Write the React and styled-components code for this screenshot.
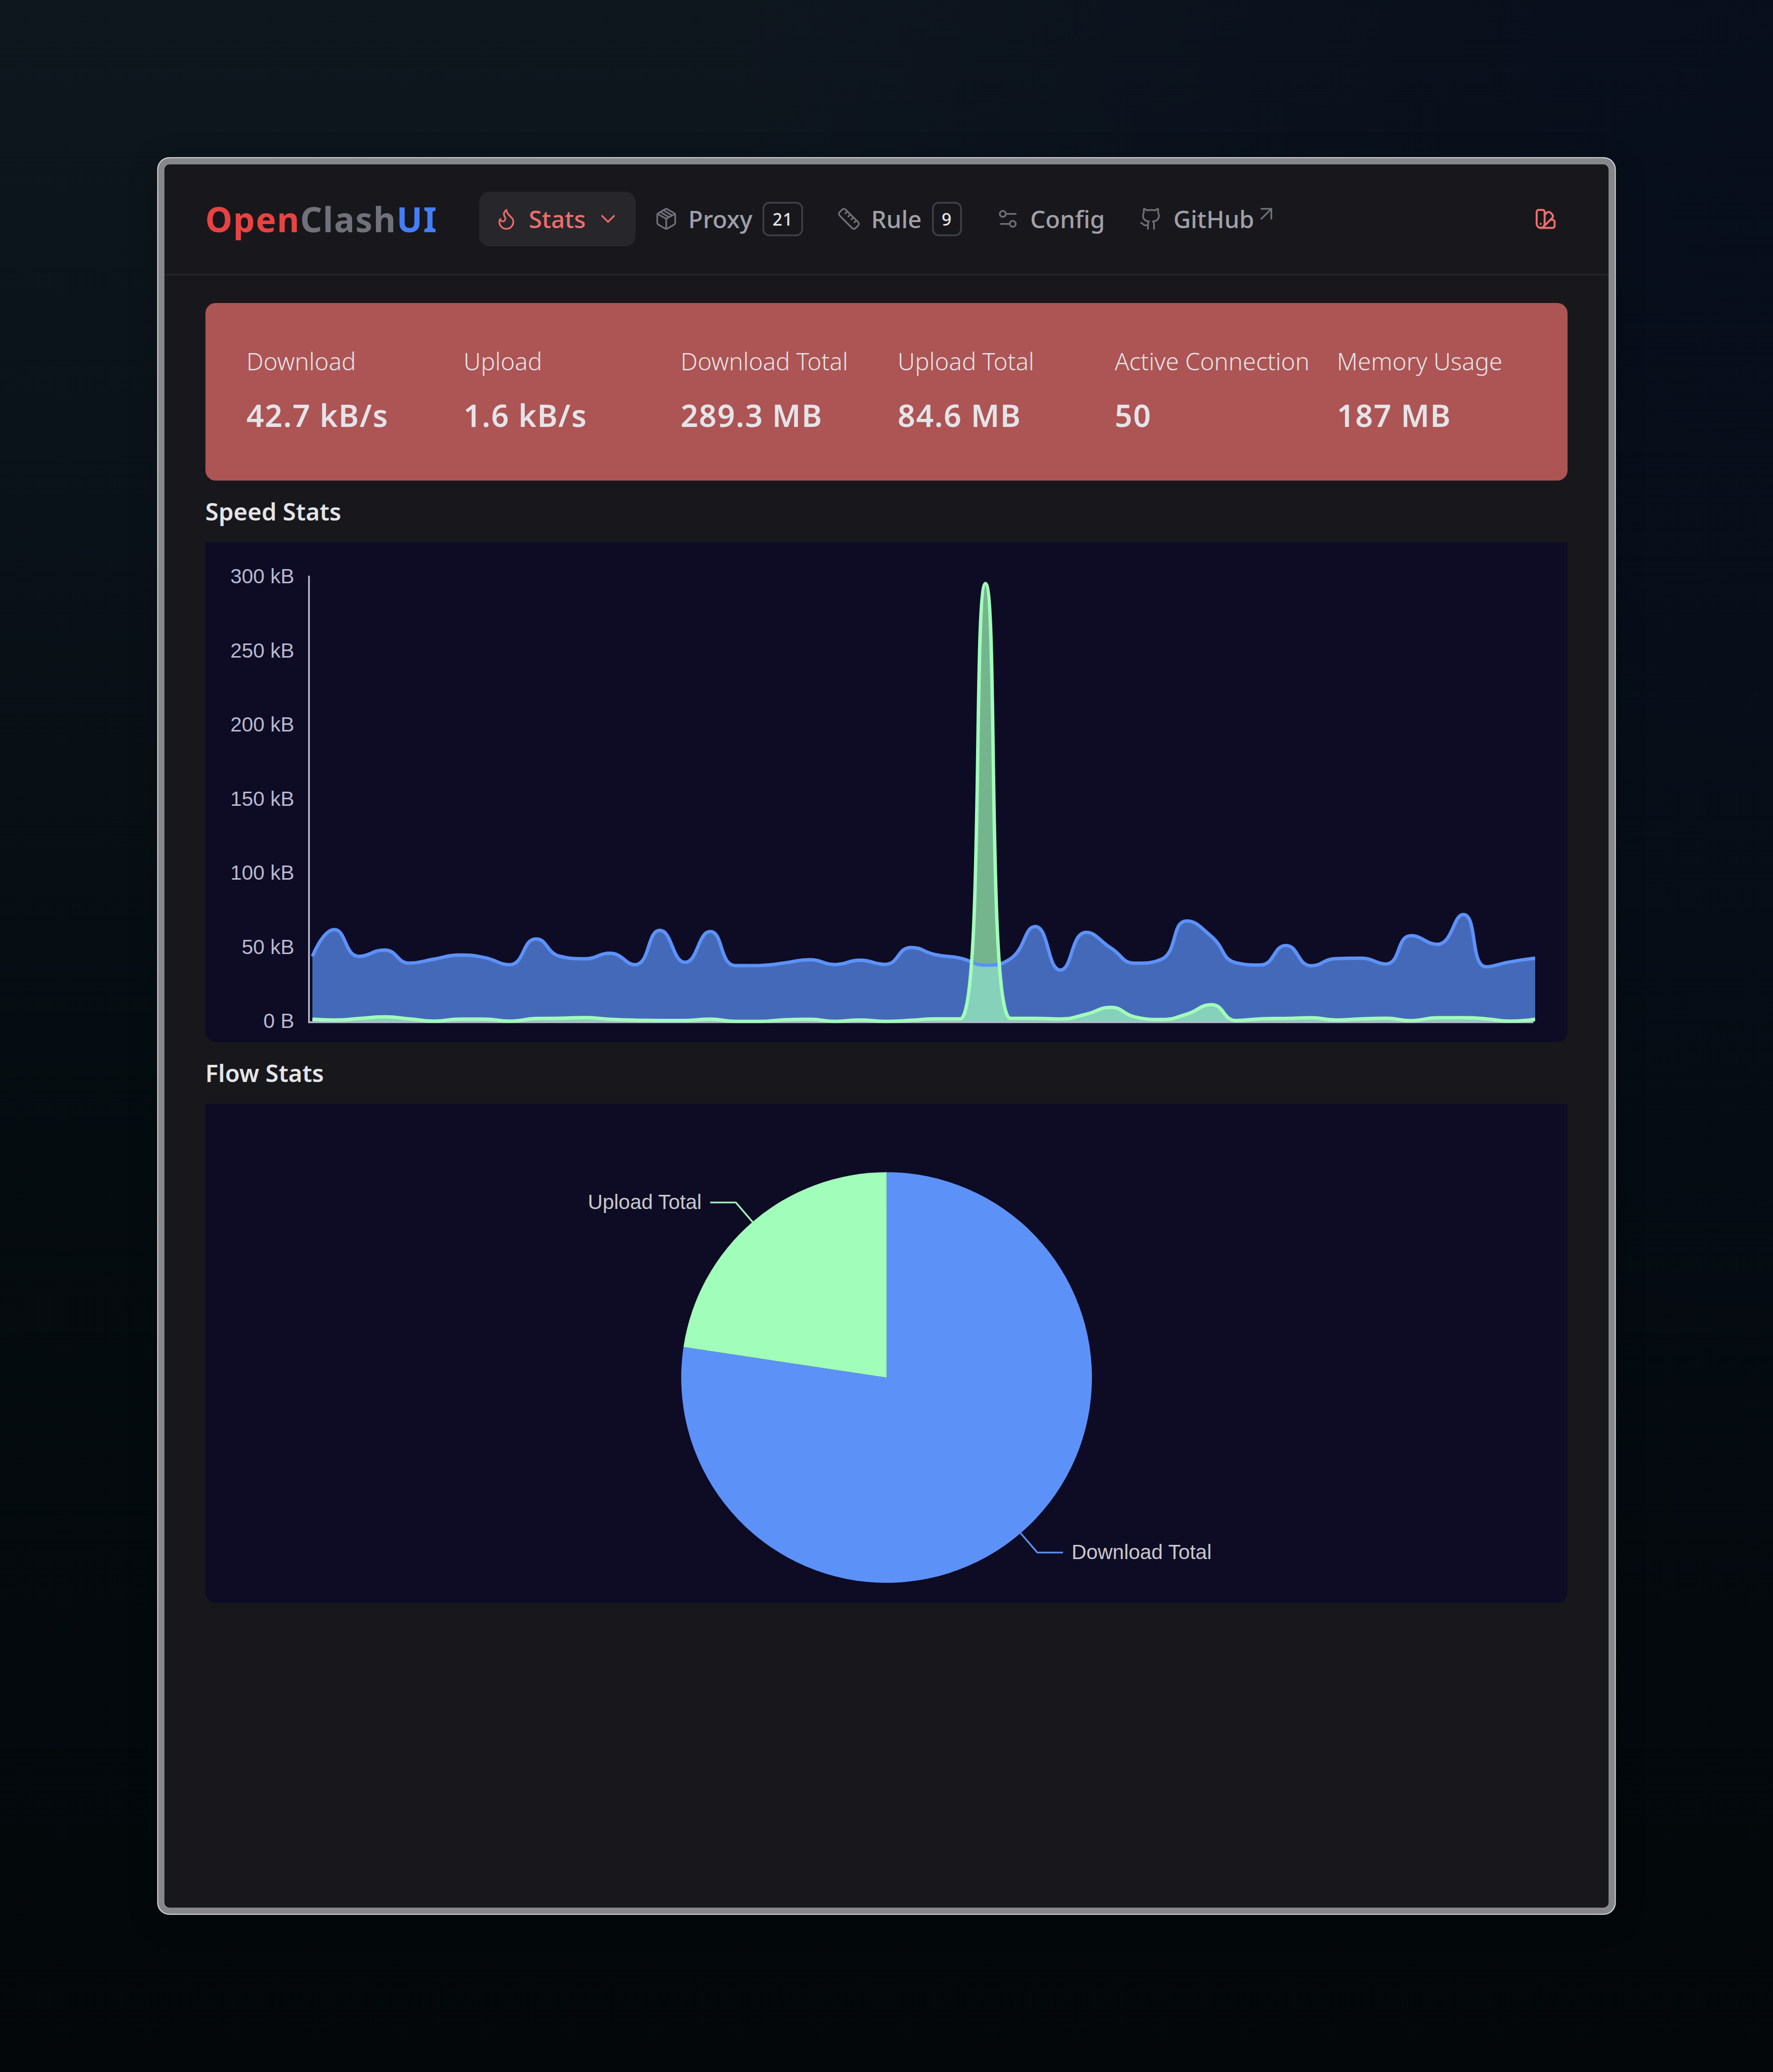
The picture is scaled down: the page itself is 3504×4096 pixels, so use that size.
import React from "react";
import styled, { createGlobalStyle, css } from "styled-components";

/* One design pixel on the 1036x1211 layout grid. */
const U = 3504 / 1036;
const u = (n) => `${+(n * U).toFixed(3)}px`;

const c = {
  panel: "#18181c",
  raised: "#27272b",
  border: "#3f3f47",
  text: "#e4e4e8",
  muted: "#a0a0aa",
  dim: "#71717b",
  accent: "#ee6e6d",
  card: "#ad5454",
  chart: "#0e0b25",
  axis: "#b9b8ce",
  down: "#5c92f8",
  up: "#a1fdba",
};

const GlobalStyle = createGlobalStyle`
  *, *::before, *::after { box-sizing: border-box; }
  body {
    margin: 0;
    font-family: "Noto Sans", "Open Sans", sans-serif;
    -webkit-font-smoothing: antialiased;
  }
`;

const Desktop = styled.div`
  width: 3504px;
  height: 4096px;
  padding: ${u(96)};
  display: flex;
  background:
    radial-gradient(ellipse 60% 75% at 100% 8%, rgba(5, 11, 27, 0.7), rgba(5, 11, 27, 0)),
    linear-gradient(180deg, #0e161e 0%, #0a1219 25%, #050c10 55%, #03090c 80%, #03070a 100%);
`;

const Window = styled.div`
  flex: 1;
  display: flex;
  flex-direction: column;
  overflow: hidden;
  border-radius: ${u(3)};
  background: ${c.panel};
  color: ${c.text};
  box-shadow: 0 0 0 12.6px #85878a, 0 0 0 14.3px #e6e8ea, 0 10px 60px 10px rgba(0, 0, 0, 0.25);
`;

const Header = styled.header`
  flex: none;
  height: ${u(65)};
  padding: 0 ${u(24)} ${u(1)};
  display: flex;
  align-items: center;
  box-shadow: inset 0 -${u(1)} 0 #252529;
`;

const Logo = styled.div`
  width: ${u(160)};
  font-size: ${u(20)};
  line-height: ${u(28)};
  font-weight: 700;
  letter-spacing: 0.025em;
  white-space: nowrap;
`;

const LogoPart = styled.span`
  color: ${(p) => p.$color};
`;

const Nav = styled.nav`
  display: flex;
  gap: ${u(2)};
`;

const NavItem = styled.a`
  height: ${u(32)};
  padding: 0 ${u(9)};
  display: flex;
  align-items: center;
  gap: ${u(6)};
  border-radius: ${u(6)};
  font-size: ${u(14)};
  line-height: ${u(20)};
  font-weight: 500;
  white-space: nowrap;
  color: ${c.muted};
  ${(p) =>
    p.$active &&
    css`
      background: ${c.raised};
      color: ${c.accent};
    `}
`;

const Badge = styled.span`
  height: ${u(20)};
  padding: 0 ${u(5.75)};
  display: flex;
  align-items: center;
  border-radius: ${u(4)};
  box-shadow: inset 0 0 0 ${u(1)} ${c.border};
  font-size: ${u(10)};
  letter-spacing: 0.025em;
  line-height: ${u(12)};
  color: ${c.text};
`;

const External = styled.span`
  display: flex;
  align-items: flex-start;
  height: ${u(20)};
  svg {
    color: ${c.dim};
  }
`;

const Glyph = styled.svg`
  display: block;
  flex: none;
  width: ${u(14)};
  height: ${u(14)};
  fill: none;
  stroke: currentColor;
  stroke-width: ${(p) => p.$weight || 1.65};
  stroke-linecap: round;
  stroke-linejoin: round;
  color: ${(p) => p.$color || "inherit"};
`;

const ThemeButton = styled.button`
  margin: 0 0 0 auto;
  padding: ${u(6)};
  border: 0;
  background: none;
  color: ${c.accent};
`;

const Content = styled.main`
  padding: ${u(16)} ${u(24)};
  display: flex;
  flex-direction: column;
`;

const Summary = styled.section`
  height: ${u(104)};
  padding: ${u(24)};
  display: grid;
  grid-template-columns: repeat(6, 1fr);
  gap: ${u(16)};
  border-radius: ${u(6)};
  background: ${c.card};
`;

const Metric = styled.div`
  display: flex;
  flex-direction: column;
  gap: ${u(8)};
  white-space: nowrap;
`;

const MetricLabel = styled.div`
  font-size: ${u(14)};
  line-height: ${u(20)};
  font-weight: 300;
`;

const MetricValue = styled.div`
  font-size: ${u(18)};
  line-height: ${u(27)};
  font-weight: 600;
  letter-spacing: 0.025em;
`;

const Title = styled.h2`
  margin: 0;
  font-size: ${u(14)};
  line-height: ${u(36)};
  font-weight: 600;
`;

const ChartPanel = styled.section`
  height: ${u(292)};
  overflow: hidden;
  border-radius: 0 0 ${u(6)} ${u(6)};
  background: ${c.chart};
`;

const ChartSvg = styled.svg`
  display: block;
  width: 100%;
  height: 100%;
  font-family: "Liberation Sans", Arial, sans-serif;
  font-size: 12px;
`;

/* Icons */

const paths = {
  flame: [
    "M8.5 14.5A2.5 2.5 0 0 0 11 12c0-1.38-.5-2-1-3-1.072-2.143-.224-4.054 2-6 .5 2.5 2 4.9 4 6.5 2 1.6 3 3.5 3 5.5a7 7 0 1 1-14 0c0-1.153.433-2.294 1-3a2.5 2.5 0 0 0 2.5 2.5z",
  ],
  chevron: ["m6 9 6 6 6-6"],
  box: [
    "M11 21.73a2 2 0 0 0 2 0l7-4A2 2 0 0 0 21 16V8a2 2 0 0 0-1-1.73l-7-4a2 2 0 0 0-2 0l-7 4A2 2 0 0 0 3 8v8a2 2 0 0 0 1 1.73z",
    "M12 22V12",
    "M3.3 7 12 12l8.7-5",
    "M6.3 5.3l8.4 5M9.3 3.5l8.4 5",
  ],
  ruler: [
    "M21.3 15.3a2.4 2.4 0 0 1 0 3.4l-2.6 2.6a2.4 2.4 0 0 1-3.4 0L2.7 8.7a2.41 2.41 0 0 1 0-3.4l2.6-2.6a2.41 2.41 0 0 1 3.4 0Z",
    "m14.5 12.5 2-2",
    "m11.5 9.5 2-2",
    "m8.5 6.5 2-2",
    "m17.5 15.5 2-2",
  ],
  settings: [
    "M20 7h-9",
    "M14 17H5",
    "M20 17a3 3 0 1 1-6 0 3 3 0 0 1 6 0Z",
    "M10 7a3 3 0 1 1-6 0 3 3 0 0 1 6 0Z",
  ],
  github: [
    "M15 22v-4a4.8 4.8 0 0 0-1-3.5c3 0 6-2 6-5.5.08-1.25-.27-2.48-1-3.5.28-1.15.28-2.35 0-3.5 0 0-1 0-3 1.5-2.64-.5-5.36-.5-8 0C6 2 5 2 5 2c-.3 1.15-.3 2.35 0 3.5A5.403 5.403 0 0 0 4 9c0 3.5 3 5.5 6 5.5-.39.49-.68 1.05-.85 1.65-.17.6-.22 1.23-.15 1.85v4",
    "M9 18c-4.51 2-5-2-7-2",
  ],
  arrow: ["M7 7h10v10", "M7 17 17 7"],
  swatch: [
    "M11 17a4 4 0 0 1-8 0V5a2 2 0 0 1 2-2h4a2 2 0 0 1 2 2Z",
    "M16.7 13H19a2 2 0 0 1 2 2v4a2 2 0 0 1-2 2H7",
    "M7 17h.01",
    "m11 8 2.3-2.3a2.4 2.4 0 0 1 3.404.004L18.6 7.6a2.4 2.4 0 0 1 .026 3.434L9.9 19.8",
  ],
};

function Icon({ name, color, weight }) {
  return (
    <Glyph viewBox="0 0 24 24" $color={color} $weight={weight}>
      {paths[name].map((d) => (
        <path key={d} d={d} />
      ))}
    </Glyph>
  );
}

/* Speed chart: samples are [x, download kB, upload kB] */

const samples = [
  [62.5, 43.8, 1.5], [75.3, 61.9, 0.9], [89.8, 43.8, 1.9], [104.7, 48.1, 3.0],
  [119.2, 39.3, 1.7], [133.8, 42.0, 0.1], [148.4, 44.7, 1.5], [163.1, 43.0, 1.5],
  [177.7, 38.2, 0.1], [193.2, 55.6, 1.9], [207.1, 43.9, 2.1], [221.7, 42.2, 2.5],
  [236.3, 45.9, 1.4], [251.0, 38.2, 0.8], [265.5, 61.4, 0.6], [280.3, 39.8, 0.6],
  [295.0, 60.6, 1.5], [309.6, 37.6, 0.0], [324.2, 37.7, 0.0], [338.8, 39.5, 1.1],
  [353.2, 41.6, 1.4], [367.8, 38.3, 0.0], [382.5, 41.2, 0.9], [397.1, 38.4, 0.0],
  [412.3, 49.8, 0.7], [426.4, 45.0, 1.7], [441.0, 42.6, 1.7], [455.8, 37.9, 295.2],
  [470.4, 42.2, 2.0], [484.9, 63.9, 2.0], [499.6, 34.6, 1.6], [514.6, 60.0, 4.8],
  [529.0, 49.5, 9.4], [543.3, 39.2, 2.9], [558.6, 41.8, 1.2], [573.3, 67.7, 4.8],
  [587.9, 57.2, 11.2], [602.2, 39.5, 0.6], [616.5, 38.0, 1.7], [631.3, 51.1, 2.0],
  [646.2, 37.5, 2.4], [660.4, 42.3, 0.9], [675.1, 42.6, 1.7], [689.8, 38.7, 2.1],
  [704.5, 57.8, 0.5], [719.7, 51.9, 2.4], [735.0, 72.0, 2.4], [748.4, 36.8, 1.7],
  [762.3, 40.1, 0.1], [777.0, 42.6, 1.4],
];

const AXIS_X = 60;
const TOP = 20;
const BASE = 280;
const MAX_KB = 300;
const toY = (kb) => BASE - (kb * (BASE - TOP)) / MAX_KB;
const clamp = (v, a, b) => Math.max(Math.min(a, b), Math.min(v, Math.max(a, b)));

/* Bezier through the points whose handles never leave the span of a segment. */
function smoothPath(pts, smooth = 0.5) {
  let d = `M${pts[0][0]},${pts[0][1]}`;
  let [c0x, c0y] = pts[0];
  for (let i = 1; i < pts.length; i++) {
    const [px, py] = pts[i - 1];
    const [x, y] = pts[i];
    let c1x = x;
    let c1y = y;
    let n0x = x;
    let n0y = y;
    if (i < pts.length - 1) {
      const [nx, ny] = pts[i + 1];
      const prev = Math.hypot(x - px, y - py);
      const next = Math.hypot(nx - x, ny - y);
      const ratio = next / (next + prev);
      n0x = clamp(x + (nx - px) * smooth * ratio, nx, x);
      n0y = clamp(y + (ny - py) * smooth * ratio, ny, y);
      c1x = clamp(x - ((n0x - x) * prev) / next, px, x);
      c1y = clamp(y - ((n0y - y) * prev) / next, py, y);
      n0x = x + ((x - c1x) * next) / prev;
      n0y = y + ((y - c1y) * next) / prev;
    }
    d += `C${[c0x, c0y, c1x, c1y, x, y].map((v) => v.toFixed(2)).join(",")}`;
    c0x = n0x;
    c0y = n0y;
  }
  return d;
}

function SpeedChart() {
  const down = smoothPath(samples.map(([x, a]) => [x, toY(a)]));
  const up = smoothPath(samples.map(([x, , b]) => [x, toY(b)]));
  const close = `L777,${BASE}L62.5,${BASE}Z`;
  return (
    <ChartSvg viewBox="0 0 796 292">
      <clipPath id="plot">
        <rect x="59" y="19" width="718" height="262" />
      </clipPath>
      {[300, 250, 200, 150, 100, 50, 0].map((kb) => (
        <text key={kb} x="51.9" y={toY(kb) + 3.95} textAnchor="end" fill={c.axis}>
          {kb ? `${kb} kB` : "0 B"}
        </text>
      ))}
      <path d={`M${AXIS_X + 0.5},19.5V281M${AXIS_X},280.5H776`} stroke={c.axis} fill="none" />
      <g clipPath="url(#plot)">
        <path d={down + close} fill={c.down} fillOpacity="0.7" />
        <path d={up + close} fill={c.up} fillOpacity="0.7" />
        <path d={down} stroke={c.down} strokeWidth="2" strokeLinejoin="bevel" fill="none" />
        <path d={up} stroke={c.up} strokeWidth="2" strokeLinejoin="bevel" fill="none" />
      </g>
    </ChartSvg>
  );
}

/* Flow chart */

const CX = 398;
const CY = 160;
const R = 120;
const polar = (turn, r) => [
  CX + r * Math.sin(turn * 2 * Math.PI),
  CY - r * Math.cos(turn * 2 * Math.PI),
];

function Slice({ from, to, color, label }) {
  const [x0, y0] = polar(from, R);
  const [x1, y1] = polar(to, R);
  const mid = (from + to) / 2;
  const [ex, ey] = polar(mid, R);
  const [bx, by] = polar(mid, R + 15);
  const side = bx > CX ? 1 : -1;
  return (
    <g>
      <path
        d={`M${CX},${CY}L${x0},${y0}A${R},${R} 0 ${to - from > 0.5 ? 1 : 0} 1 ${x1},${y1}Z`}
        fill={color}
      />
      <path d={`M${ex},${ey}L${bx},${by}h${15 * side}`} stroke={color} fill="none" />
      <text
        x={bx + 20 * side}
        y={by + 3.75}
        textAnchor={side > 0 ? "start" : "end"}
        fill="#c8c8ca"
      >
        {label}
      </text>
    </g>
  );
}

function FlowChart() {
  const split = 289.3 / (289.3 + 84.6);
  return (
    <ChartSvg viewBox="0 0 796 292">
      <Slice from={0} to={split} color={c.down} label="Download Total" />
      <Slice from={split} to={1} color={c.up} label="Upload Total" />
    </ChartSvg>
  );
}

const metrics = [
  ["Download", "42.7 kB/s"],
  ["Upload", "1.6 kB/s"],
  ["Download Total", "289.3 MB"],
  ["Upload Total", "84.6 MB"],
  ["Active Connection", "50"],
  ["Memory Usage", "187 MB"],
];

export default function App() {
  return (
    <>
      <GlobalStyle />
      <Desktop>
        <Window>
          <Header>
            <Logo>
              <LogoPart $color="#e84342">Open</LogoPart>
              <LogoPart $color={c.dim}>Clash</LogoPart>
              <LogoPart $color="#447efb">UI</LogoPart>
            </Logo>
            <Nav>
              <NavItem $active>
                <Icon name="flame" />
                Stats
                <Icon name="chevron" />
              </NavItem>
              <NavItem>
                <Icon name="box" color={c.dim} />
                Proxy
                <Badge>21</Badge>
              </NavItem>
              <NavItem>
                <Icon name="ruler" color={c.dim} />
                Rule
                <Badge>9</Badge>
              </NavItem>
              <NavItem>
                <Icon name="settings" color={c.dim} />
                Config
              </NavItem>
              <NavItem>
                <Icon name="github" color={c.dim} />
                <External>
                  GitHub
                  <Icon name="arrow" color={c.dim} />
                </External>
              </NavItem>
            </Nav>
            <ThemeButton>
              <Icon name="swatch" weight={2} />
            </ThemeButton>
          </Header>
          <Content>
            <Summary>
              {metrics.map(([label, value]) => (
                <Metric key={label}>
                  <MetricLabel>{label}</MetricLabel>
                  <MetricValue>{value}</MetricValue>
                </Metric>
              ))}
            </Summary>
            <Title>Speed Stats</Title>
            <ChartPanel>
              <SpeedChart />
            </ChartPanel>
            <Title>Flow Stats</Title>
            <ChartPanel>
              <FlowChart />
            </ChartPanel>
          </Content>
        </Window>
      </Desktop>
    </>
  );
}
